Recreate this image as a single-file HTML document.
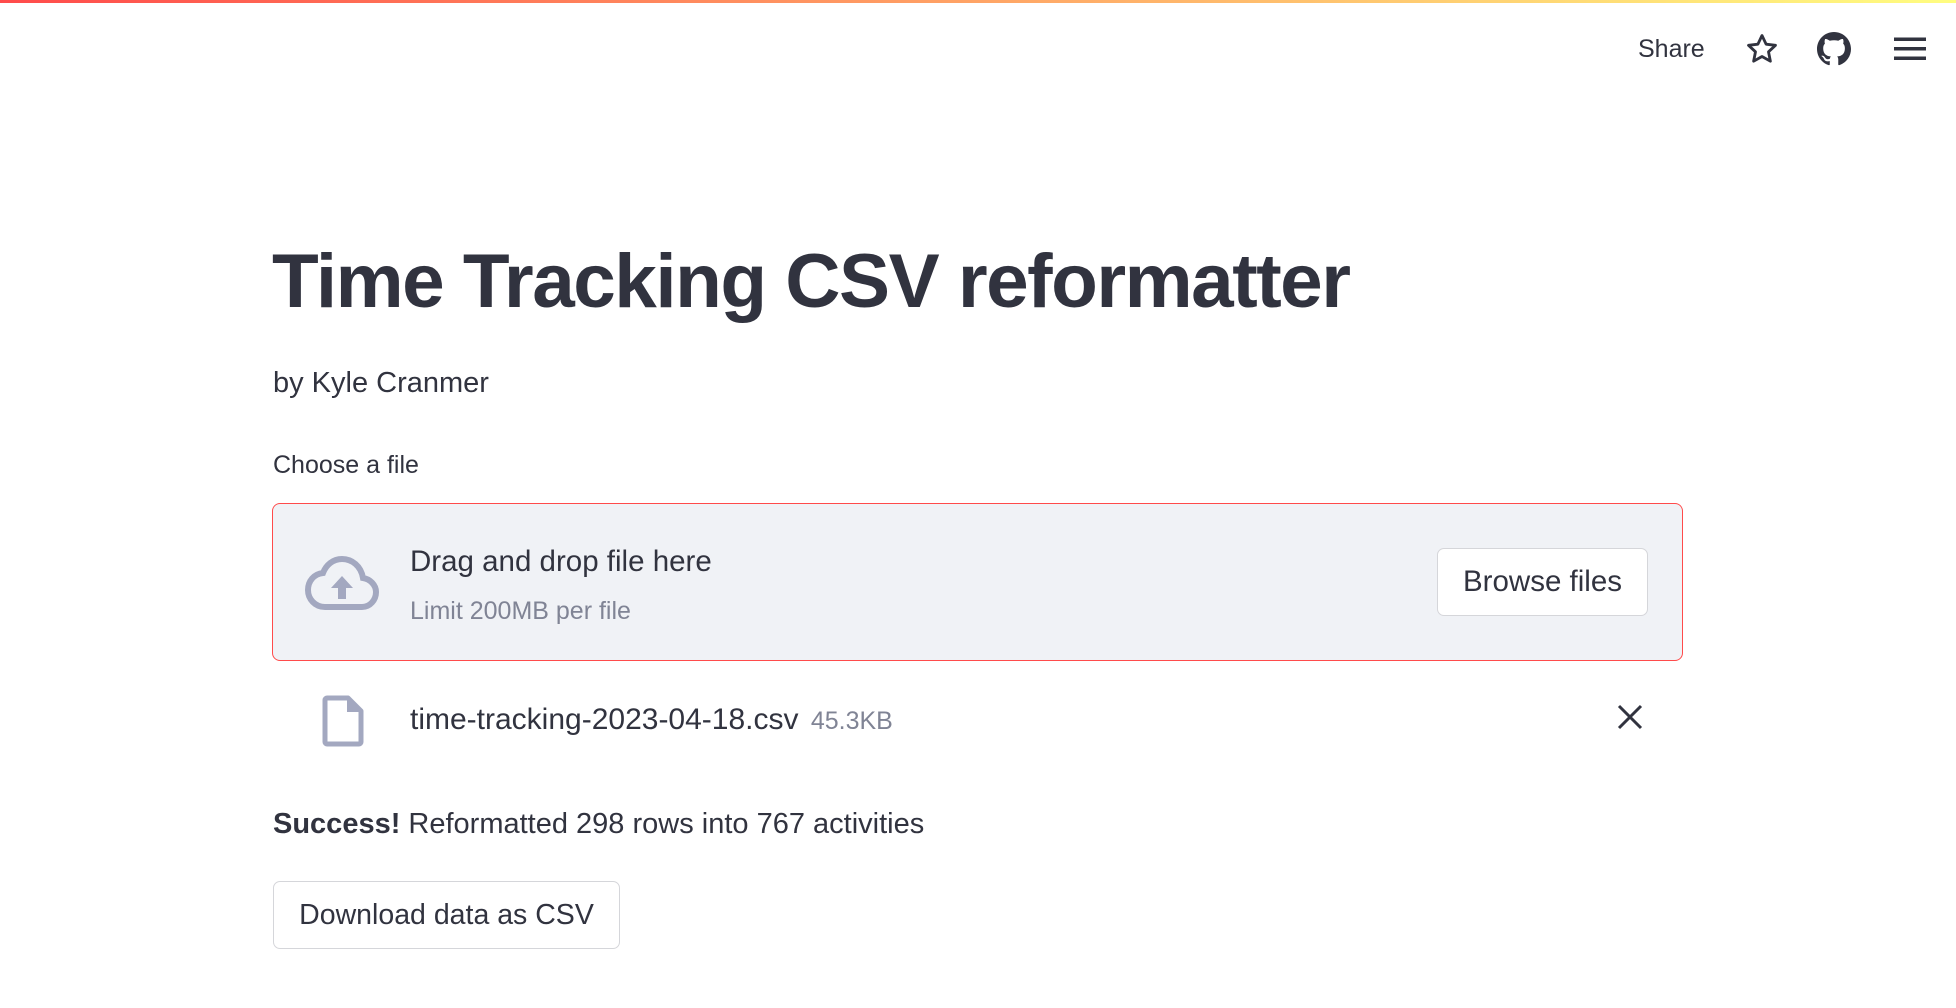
<!DOCTYPE html>
<html><head><meta charset="utf-8"><style>
*{margin:0;padding:0;box-sizing:border-box}
body{width:1956px;height:1008px;background:#fff;position:relative;overflow:hidden;font-family:"Liberation Sans",sans-serif;color:#31333f}
.a{position:absolute;white-space:nowrap}
.bar{position:absolute;left:0;top:0;width:1956px;height:3px;background:linear-gradient(90deg,#ff4b4b,#fffd80)}
.btn{position:absolute;background:#fff;border:1.5px solid #d5d6da;border-radius:7px;display:flex;align-items:center;justify-content:center;color:#31333f}
</style></head><body>
<div class="bar"></div>
<div class="a" style="left:1638px;top:35px;font-size:25px;">Share</div>
<svg class="a" style="left:1745px;top:32px" width="34" height="34" viewBox="0 0 24 24" fill="none" stroke="#31333f" stroke-width="2" stroke-linejoin="round"><path d="M12 2.5l2.9 6.1 6.6.8-4.9 4.6 1.3 6.6L12 17.3l-5.9 3.3 1.3-6.6L2.5 9.4l6.6-.8z"/></svg>
<svg class="a" style="left:1817px;top:32px" width="34" height="34" viewBox="0 0 16 16"><path fill="#31333f" d="M8 0C3.58 0 0 3.58 0 8c0 3.54 2.29 6.53 5.47 7.59.4.07.55-.17.55-.38 0-.19-.01-.82-.01-1.49-2.01.37-2.53-.49-2.69-.94-.09-.23-.48-.94-.82-1.13-.28-.15-.68-.52-.01-.53.63-.01 1.08.58 1.23.82.72 1.21 1.87.87 2.33.66.07-.52.28-.87.51-1.07-1.78-.2-3.64-.89-3.64-3.95 0-.87.31-1.59.82-2.15-.08-.2-.36-1.02.08-2.12 0 0 .67-.21 2.2.82.64-.18 1.32-.27 2-.27.68 0 1.36.09 2 .27 1.53-1.04 2.2-.82 2.2-.82.44 1.1.16 1.92.08 2.12.51.56.82 1.27.82 2.15 0 3.07-1.87 3.75-3.65 3.95.29.25.54.73.54 1.48 0 1.07-.01 1.93-.01 2.2 0 .21.15.46.55.38A8.013 8.013 0 0016 8c0-4.42-3.58-8-8-8z"/></svg>
<svg class="a" style="left:1894px;top:36px" width="32" height="26" viewBox="0 0 32 26"><rect x="0" y="1.5" width="32" height="3.5" fill="#31333f"/><rect x="0" y="11" width="32" height="3.5" fill="#31333f"/><rect x="0" y="20.5" width="32" height="3.5" fill="#31333f"/></svg>

<div class="a" style="left:272px;top:238px;font-size:76.5px;font-weight:bold;letter-spacing:-1.5px;">Time Tracking CSV reformatter</div>
<div class="a" style="left:273px;top:367px;font-size:29px;">by Kyle Cranmer</div>
<div class="a" style="left:273px;top:451px;font-size:25px;">Choose a file</div>

<div class="a" style="left:272px;top:503px;width:1411px;height:158px;background:#f0f2f6;border:1.5px solid #ff4b4b;border-radius:8px;"></div>
<svg class="a" style="left:305px;top:556px" width="74" height="54" viewBox="0 0 74 54"><path d="M58 22C56 10 47 3 37 3 28 3 21 9 18 17 9 18 3 25 3 34c0 9 7 17 17 17h37c8 0 14-7 14-15 0-7-6-13-13-14z" fill="none" stroke="#a3a8c0" stroke-width="6"/><path d="M37 20l-11 12h7v11h8V32h7z" fill="#a3a8c0"/></svg>
<div class="a" style="left:410px;top:545px;font-size:29.5px;">Drag and drop file here</div>
<div class="a" style="left:410px;top:597px;font-size:25px;color:#808495;">Limit 200MB per file</div>
<div class="btn" style="left:1437px;top:548px;width:211px;height:68px;font-size:29.5px;">Browse files</div>

<svg class="a" style="left:322px;top:695px" width="42" height="52" viewBox="0 0 42 52"><path d="M5 3h21l13 13v31a2 2 0 01-2 2H5a2 2 0 01-2-2V5a2 2 0 012-2z" fill="none" stroke="#a3a8c0" stroke-width="5" stroke-linejoin="round"/><path d="M25 3v14h14z" fill="#a3a8c0"/></svg>
<div class="a" style="left:410px;top:703px;font-size:30px;">time-tracking-2023-04-18.csv <span style="font-size:25px;color:#808495;margin-left:4px">45.3KB</span></div>
<svg class="a" style="left:1617px;top:704px" width="26" height="26" viewBox="0 0 26 26"><path d="M2 2l22 22M24 2L2 24" stroke="#31333f" stroke-width="3"/></svg>

<div class="a" style="left:273px;top:808px;font-size:29px;"><b>Success!</b> Reformatted 298 rows into 767 activities</div>
<div class="btn" style="left:273px;top:881px;width:347px;height:68px;font-size:28.5px;">Download data as CSV</div>
</body></html>
